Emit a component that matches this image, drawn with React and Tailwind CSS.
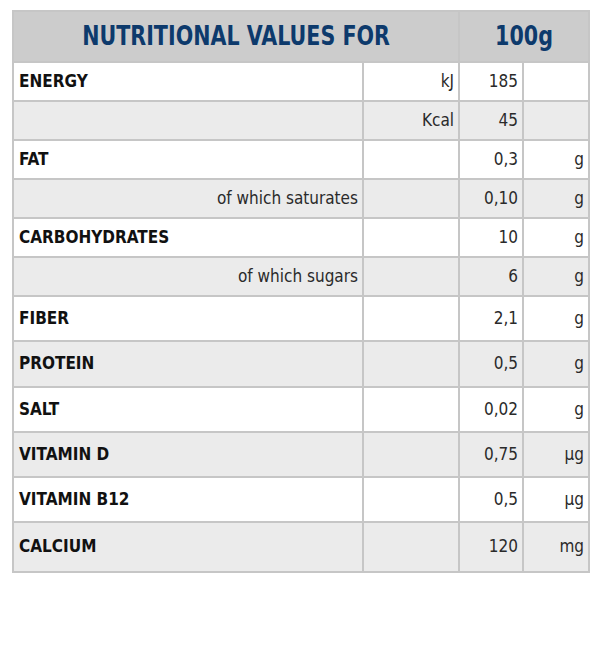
const ROWS = [
  { label: 'ENERGY', unit: 'kJ', value: '185', u2: '', h: 'h-[39px]' },
  { label: '', unit: 'Kcal', value: '45', u2: '', h: 'h-[39px]' },
  { label: 'FAT', unit: '', value: '0,3', u2: 'g', h: 'h-[39px]' },
  { label: 'of which saturates', sub: true, unit: '', value: '0,10', u2: 'g', h: 'h-[39px]' },
  { label: 'CARBOHYDRATES', unit: '', value: '10', u2: 'g', h: 'h-[39px]' },
  { label: 'of which sugars', sub: true, unit: '', value: '6', u2: 'g', h: 'h-[39px]' },
  { label: 'FIBER', unit: '', value: '2,1', u2: 'g', h: 'h-[45px]' },
  { label: 'PROTEIN', unit: '', value: '0,5', u2: 'g', h: 'h-[46px]' },
  { label: 'SALT', unit: '', value: '0,02', u2: 'g', h: 'h-[45px]' },
  { label: 'VITAMIN D', unit: '', value: '0,75', u2: 'µg', h: 'h-[45px]' },
  { label: 'VITAMIN B12', unit: '', value: '0,5', u2: 'µg', h: 'h-[45px]' },
  { label: 'CALCIUM', unit: '', value: '120', u2: 'mg', h: 'h-[50px]' },
]

const cell = 'border-2 border-[#c6c6c6]'
const light = ' pr-[4px] text-right text-[17px] font-normal text-[#2a2a2a]'

export default function App() {
  return (
    <div className="h-[645px] w-[600px] bg-white pl-[12px] pt-[10px] font-['DejaVu_Sans_Condensed','DejaVu_Sans',sans-serif] text-[#111]">
      <table className="w-[576px] table-fixed border-collapse border-2 border-[#c6c6c6]">
        <colgroup>
          <col className="w-[350px]" />
          <col className="w-[96px]" />
          <col className="w-[64px]" />
          <col className="w-[66px]" />
        </colgroup>
        <thead>
          <tr className="h-[51px] bg-[#cccccc] text-[27px] font-bold text-[#0d3a6c]">
            <th colSpan={2} className={cell + ' text-center'}>
              <span className="inline-block scale-x-[0.85]">NUTRITIONAL VALUES FOR</span>
            </th>
            <th colSpan={2} className={cell + ' text-center'}>
              <span className="inline-block scale-x-[0.85]">100g</span>
            </th>
          </tr>
        </thead>
        <tbody>
          {ROWS.map((r, i) => (
            <tr key={i} className={r.h + (i % 2 === 1 ? ' bg-[#ebebeb]' : ' bg-white')}>
              <td className={cell + (r.sub ? light : ' pl-[5px] text-left text-[17px] font-bold')}>{r.label}</td>
              <td className={cell + light}>{r.unit}</td>
              <td className={cell + light}>{r.value}</td>
              <td className={cell + light}>{r.u2}</td>
            </tr>
          ))}
        </tbody>
      </table>
    </div>
  )
}
